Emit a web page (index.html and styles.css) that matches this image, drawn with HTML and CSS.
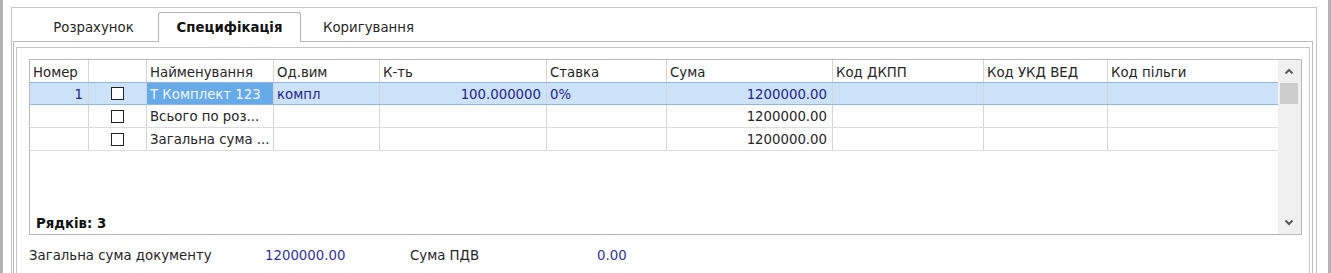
FILE: index.html
```html
<!DOCTYPE html>
<html>
  <head>
    <title>Специфікація</title>
    <link rel="stylesheet" href="styles.css">
  </head>
  <body>
    <div class="window">
      <div class="edge"></div>

      <div class="main">
        <div class="panel">

          <div class="tab-strip">
            <div class="tab tab-calc">Розрахунок</div>
            <div class="tab tab-spec active">Специфікація</div>
            <div class="tab tab-fix">Коригування</div>
          </div>

          <div class="tab-page">
            <div class="group">

              <div class="grid">
                <div class="grid-body">
                  <div class="row head">
                    <div class="cell c1">Номер</div>
                    <div class="cell c2"></div>
                    <div class="cell c3">Найменування</div>
                    <div class="cell c4">Од.вим</div>
                    <div class="cell c5">К-ть</div>
                    <div class="cell c6">Ставка</div>
                    <div class="cell c7">Сума</div>
                    <div class="cell c8">Код ДКПП</div>
                    <div class="cell c9">Код УКД ВЕД</div>
                    <div class="cell c10">Код пільги</div>
                  </div>

                  <div class="row selected">
                    <div class="cell c1 num">1</div>
                    <div class="cell c2 check-cell"><span class="check"></span></div>
                    <div class="cell c3 focus">Т Комплект 123</div>
                    <div class="cell c4">компл</div>
                    <div class="cell c5 num">100.000000</div>
                    <div class="cell c6">0%</div>
                    <div class="cell c7 num">1200000.00</div>
                    <div class="cell c8"></div>
                    <div class="cell c9"></div>
                    <div class="cell c10"></div>
                  </div>

                  <div class="row">
                    <div class="cell c1"></div>
                    <div class="cell c2 check-cell"><span class="check"></span></div>
                    <div class="cell c3">Всього по роз...</div>
                    <div class="cell c4"></div>
                    <div class="cell c5"></div>
                    <div class="cell c6"></div>
                    <div class="cell c7 num">1200000.00</div>
                    <div class="cell c8"></div>
                    <div class="cell c9"></div>
                    <div class="cell c10"></div>
                  </div>

                  <div class="row">
                    <div class="cell c1"></div>
                    <div class="cell c2 check-cell"><span class="check"></span></div>
                    <div class="cell c3">Загальна сума ...</div>
                    <div class="cell c4"></div>
                    <div class="cell c5"></div>
                    <div class="cell c6"></div>
                    <div class="cell c7 num">1200000.00</div>
                    <div class="cell c8"></div>
                    <div class="cell c9"></div>
                    <div class="cell c10"></div>
                  </div>

                  <div class="grid-space"></div>
                  <div class="grid-foot">Рядків: 3</div>
                </div>

                <!-- vertical scrollbar -->
                <div class="scroll">
                  <div class="scroll-btn">
                    <svg width="10" height="7" viewBox="0 0 10 7"><polyline points="1.5,5.5 5,2 8.5,5.5" fill="none" stroke="#5a5a5a" stroke-width="2"/></svg>
                  </div>
                  <div class="scroll-thumb"></div>
                  <div class="scroll-space"></div>
                  <div class="scroll-btn">
                    <svg width="10" height="7" viewBox="0 0 10 7"><polyline points="1.5,1.5 5,5 8.5,1.5" fill="none" stroke="#5a5a5a" stroke-width="2"/></svg>
                  </div>
                </div>
              </div>

              <div class="totals">
                <span class="total-label doc">Загальна сума документу</span>
                <span class="total-value doc-value">1200000.00</span>
                <span class="total-label vat">Сума ПДВ</span>
                <span class="total-value">0.00</span>
              </div>

            </div>
          </div>

        </div>
      </div>

      <div class="edge"></div>
    </div>
  </body>
</html>
```

FILE: styles.css
```css
body{
  margin: 0;
  background-color: white;
  color: #262626;
  font-family: "DejaVu Sans", Verdana, sans-serif;
  font-size: 13.3px;
  line-height: 17px;
  overflow: hidden;
}

.window{
  display: flex;
  height: 273px;
}

.edge{
  width: 3px;
  background-color: #b2b2b2;
}

.main{
  flex: 1;
  padding: 7px 11px 0 8px;
}

.panel{
  border: 1px solid #c6c6c6;
  border-bottom: none;
  height: 300px;
  padding: 4px 3px 0 1px;
}

/* tabs */

.tab-strip{
  display: flex;
  height: 29px;
  padding-left: 23px;
  border-bottom: 1px solid #bcbcbc;
}

.tab{
  text-align: center;
  line-height: 31px;
  color: #262626;
}

.tab-calc{
  width: 115px;
  margin-right: 7px;
}

.tab-spec{
  width: 141px;
}

.tab-fix{
  width: 135px;
}

.tab.active{
  height: 29px;
  margin-bottom: -1px;
  background-color: white;
  border: 1px solid #b4b4b4;
  border-bottom: none;
  border-radius: 3px 3px 0 0;
  font-weight: bold;
  line-height: 29px;
  color: #111;
}

.tab-page{
  border: 1px solid #bcbcbc;
  border-top: none;
  height: 260px;
  padding: 5px 2px 0 2px;
}

.group{
  border: 1px solid #c6c6c6;
  height: 260px;
  padding: 11px 0 0 12px;
}

/* grid */

.grid{
  display: flex;
  width: 1271px;
  height: 174px;
  border: 1px solid #b9b9b9;
}

.grid-body{
  width: 1248px;
  display: flex;
  flex-direction: column;
}

.row{
  display: flex;
  height: 23px;
  border-bottom: 1px solid #dcdcdc;
  box-sizing: border-box;
}

.row.head{
  height: 22px;
  border-bottom: none;
}

.row.selected{
  height: 23px;
  background-color: #cce2f8;
  border-top: 1px solid #90b6e4;
  border-bottom: 1px solid #90b6e4;
  color: #25258f;
}

.cell{
  box-sizing: border-box;
  border-right: 1px solid #d6d6d6;
  padding: 0 3px;
  line-height: 24px;
  white-space: nowrap;
  overflow: hidden;
}

.row.head .cell{
  line-height: 26px;
}

.c1{ width: 59px; }
.c2{ width: 58px; }
.c3{ width: 127px; }
.c4{ width: 106px; }
.c5{ width: 167px; }
.c6{ width: 120px; }
.c7{ width: 166px; }
.c8{ width: 151px; }
.c9{ width: 124px; }
.c10{ width: 170px; border-right: none; }

.num{
  text-align: right;
  padding-right: 5px;
}

.cell.focus{
  background-color: #66aaea;
  color: #f2f7fd;
}

.check-cell{
  display: flex;
  align-items: center;
  justify-content: center;
}

.check{
  width: 11px;
  height: 11px;
  border: 1px solid #222;
  background-color: white;
}

.grid-space{
  flex: 1;
}

.grid-foot{
  font-weight: bold;
  padding: 0 0 2px 6px;
  color: #111;
}

.scroll{
  width: 23px;
  background-color: #f0f0f0;
  display: flex;
  flex-direction: column;
}

.scroll-btn{
  height: 23px;
  display: flex;
  align-items: center;
  justify-content: center;
  padding-right: 1px;
}

.scroll-thumb{
  height: 21px;
  margin: 0 3px 0 2px;
  background-color: #cdcdcd;
}

.scroll-space{
  flex: 1;
}

/* totals under the grid */

.totals{
  display: flex;
  margin-top: 12px;
}

.total-label.doc{
  width: 236px;
}

.total-value.doc-value{
  width: 145px;
}

.total-label.vat{
  width: 187px;
}

.total-value{
  color: #33339a;
}
```
